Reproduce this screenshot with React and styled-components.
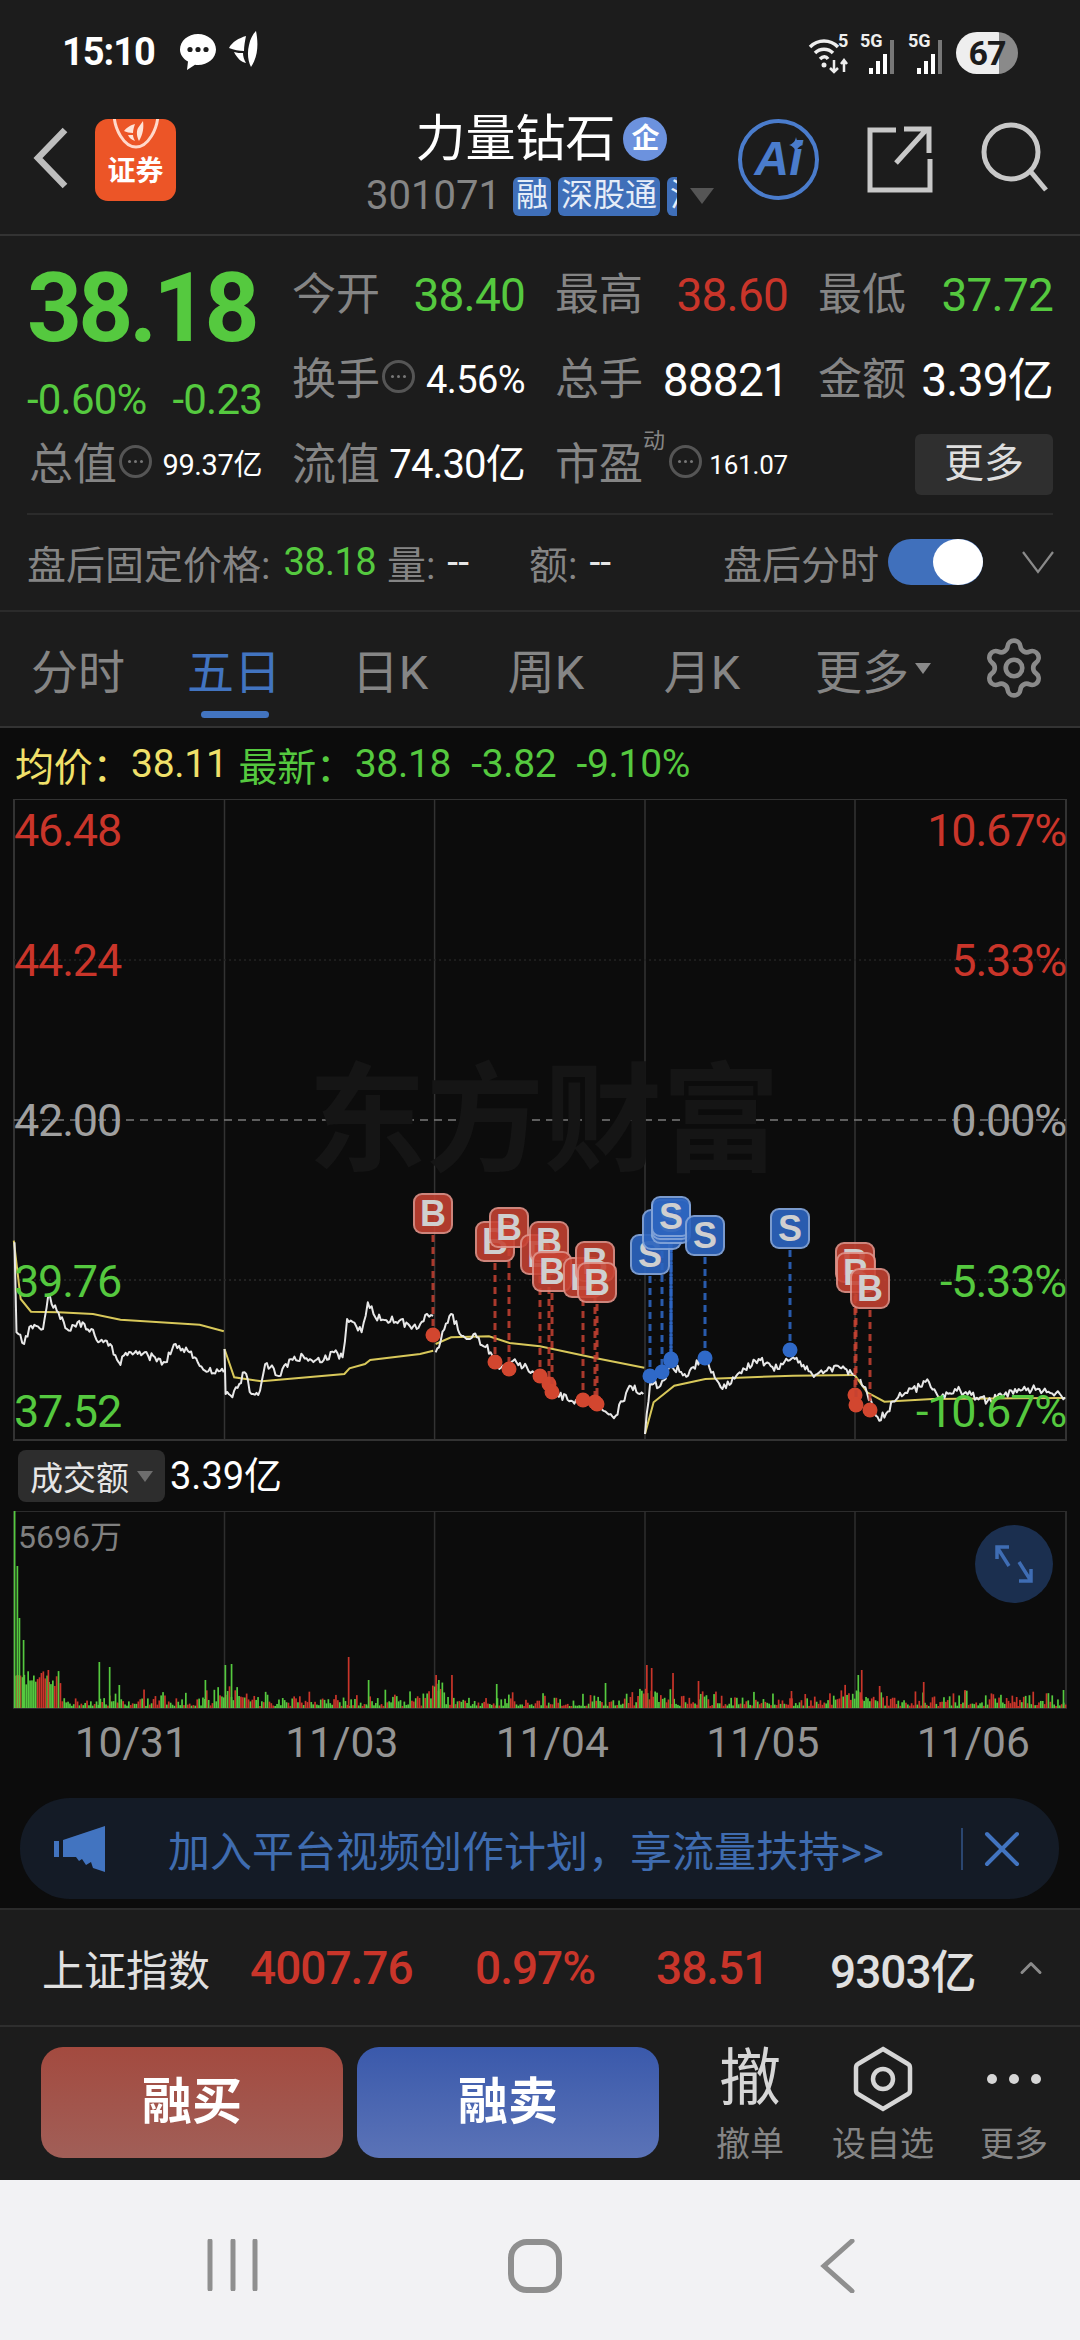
import React from "react";
import styled, { createGlobalStyle } from "styled-components";
import { Settings, X, ChevronUp } from "lucide-react";

const FONT = `Roboto, "Noto Sans CJK SC", sans-serif`;
const GREEN = "#55c93f";
const RED = "#c9352a";
const GRAY = "#858585";

const GlobalStyle = createGlobalStyle`
  html, body { margin: 0; padding: 0; background: #1c1c1c; }
  * { box-sizing: border-box; }
`;

const Page = styled.div`
  width: 1080px;
  height: 2340px;
  overflow: hidden;
  display: flex;
  flex-direction: column;
  background: #1c1c1c;
  font-family: ${FONT};
  color: #fff;
`;

const Icon = styled.svg`
  flex: none;
  display: block;
  margin: ${(p) => p.$m || "0"};
`;

/* status bar */
const StatusBar = styled.div`
  height: 96px;
  flex: none;
  display: flex;
  align-items: flex-start;
  padding: 30px 62px 0 62px;
`;
const Time = styled.div`
  font-size: 38px;
  line-height: 44px;
  font-weight: 700;
  letter-spacing: -1px;
  width: 117px;
`;
const StatusRight = styled.div`
  margin-left: auto;
  display: flex;
  align-items: center;
  gap: 8px;
`;
const Battery = styled.div`
  width: 62px;
  height: 42px;
  border-radius: 21px;
  background: linear-gradient(90deg, #eeeeee 0 70%, #8a8a8a 70%);
  color: #1c1c1c;
  font-size: 34px;
  font-weight: 700;
  line-height: 42px;
  text-align: center;
  letter-spacing: -1px;
`;

/* header */
const Header = styled.header`
  height: 140px;
  flex: none;
  display: grid;
  grid-template-columns: 1fr auto 1fr;
  border-bottom: 2px solid #333;
`;
const HeaderLeft = styled.div`
  display: flex;
  align-items: flex-start;
  padding: 23px 0 0 33px;
  gap: 25px;
`;
const Logo = styled.div`
  width: 81px;
  height: 82px;
  border-radius: 13px;
  background: #ec5527;
  display: flex;
  flex-direction: column;
  align-items: center;
  overflow: hidden;
`;
const LogoText = styled.div`
  font-size: 28px;
  line-height: 30px;
  font-weight: 700;
  margin-top: 6px;
`;
const HeaderCenter = styled.div`
  display: flex;
  flex-direction: column;
  align-items: center;
  padding-top: 17px;
`;
const TitleRow = styled.div`
  display: flex;
  align-items: center;
  gap: 8px;
  height: 52px;
  padding-left: 3px;
`;
const Title = styled.div`
  font-size: 50px;
  line-height: 52px;
`;
const CorpBadge = styled.div`
  width: 44px;
  height: 44px;
  border-radius: 50%;
  background: #6c92de;
  font-size: 28px;
  font-weight: 700;
  line-height: 44px;
  text-align: center;
`;
const CodeRow = styled.div`
  display: flex;
  align-items: center;
  margin-top: 11px;
  height: 40px;
`;
const Code = styled.div`
  font-size: 40px;
  line-height: 44px;
  color: ${GRAY};
  margin-right: 12px;
`;
const TagClip = styled.div`
  display: flex;
  gap: 7px;
  width: 164px;
  overflow: hidden;
`;
const Tag = styled.div`
  flex: none;
  height: 39px;
  padding: 0 3px;
  border-radius: 6px;
  background: #3f6fb9;
  color: #e6edf8;
  font-size: 32px;
  line-height: 37px;
`;
const Caret = styled.div`
  flex: none;
  width: 0;
  height: 0;
  margin-left: ${(p) => p.$left || 13}px;
  border-left: ${(p) => p.$size || 12}px solid transparent;
  border-right: ${(p) => p.$size || 12}px solid transparent;
  border-top: ${(p) => (p.$size || 12) * 1.4}px solid ${(p) => p.$color || "#555"};
`;
const HeaderRight = styled.div`
  display: flex;
  align-items: flex-start;
  justify-content: flex-end;
  padding: 23px 31px 0 0;
  gap: 47px;
`;
const AiCircle = styled.div`
  position: relative;
  width: 81px;
  height: 81px;
  border-radius: 50%;
  border: 4px solid #4a7ccc;
  color: #4a7ccc;
  font-family: "Liberation Sans", sans-serif;
  font-weight: 700;
  font-style: italic;
  font-size: 48px;
  line-height: 72px;
  text-align: center;
`;
const AiSpark = styled.svg`
  position: absolute;
  left: 47px;
  top: 14px;
`;

/* quote panel */
const Quote = styled.section`
  height: 278px;
  flex: none;
  padding: 16px 0 0 29px;
  display: grid;
  grid-template-columns: 233px 233px 233px 235px;
  grid-auto-rows: 85px;
  column-gap: 30px;
`;
const PriceBlock = styled.div`
  grid-row: span 2;
  display: flex;
  flex-direction: column;
`;
const BigPrice = styled.div`
  font-size: 96px;
  line-height: 96px;
  font-weight: 700;
  letter-spacing: -3.9px;
  color: ${GREEN};
  margin: 8px 0 0 -2px;
`;
const ChangeRow = styled.div`
  display: flex;
  justify-content: space-between;
  margin: 21px 0 0 -2px;
  font-size: 42px;
  line-height: 46px;
  letter-spacing: -0.8px;
  color: ${GREEN};
`;
const Cell = styled.div`
  display: flex;
  align-items: center;
  position: relative;
`;
const Label = styled.span`
  font-size: 44px;
  line-height: 52px;
  color: ${GRAY};
  flex: none;
`;
const Val = styled.span`
  margin-left: auto;
  font-size: ${(p) => p.$size || 46}px;
  line-height: 54px;
  color: ${(p) => p.$color || "#fff"};
  white-space: nowrap;
  letter-spacing: ${(p) => p.$track ?? -0.8}px;
`;
const Sup = styled.span`
  position: absolute;
  left: 88px;
  top: 0;
  font-size: 22px;
  color: ${GRAY};
`;
const MoreBtn = styled.div`
  width: 138px;
  height: 61px;
  margin-left: auto;
  border-radius: 6px;
  background: #2f2f2f;
  color: #dedede;
  font-size: 40px;
  line-height: 60px;
  text-align: center;
`;
const DotCircle = styled.span`
  flex: none;
  width: 33px;
  height: 33px;
  margin: -6px 0 0 ${(p) => p.$left ?? 2}px;
  border-radius: 50%;
  border: 3px solid #555;
  display: flex;
  align-items: center;
  justify-content: center;
  &::before {
    content: "";
    width: 3px;
    height: 3px;
    border-radius: 50%;
    background: #777;
    box-shadow: 6px 0 0 #777, -6px 0 0 #777;
  }
`;

/* after hours row */
const AfterHours = styled.section`
  height: 97px;
  flex: none;
  margin-top: -1px;
  display: flex;
  align-items: center;
  padding: 0 0 0 27px;
  position: relative;
  &::before {
    content: "";
    position: absolute;
    top: 0;
    left: 27px;
    right: 27px;
    height: 2px;
    background: #2b2b2b;
  }
`;
const AfterText = styled.span`
  flex: none;
  font-size: ${(p) => p.$size || 39}px;
  letter-spacing: ${(p) => p.$track ?? 0}px;
  color: ${(p) => p.$color || GRAY};
  margin-left: ${(p) => p.$left || 0}px;
  white-space: nowrap;
`;
const Toggle = styled.div`
  flex: none;
  width: 95px;
  height: 46px;
  margin-left: 9px;
  border-radius: 23px;
  background: #4070bc;
  display: flex;
  justify-content: flex-end;
`;
const Knob = styled.div`
  width: 50px;
  height: 46px;
  border-radius: 50%;
  background: #fff;
`;

/* period tabs */
const Tabs = styled.nav`
  height: 118px;
  flex: none;
  display: grid;
  grid-template-columns: repeat(7, 156px);
  border-top: 2px solid #2b2b2b;
  border-bottom: 2px solid #333;
`;
const Tab = styled.div`
  display: flex;
  align-items: center;
  justify-content: center;
  padding: 0 0 2px ${(p) => p.$shift || 0}px;
  font-size: 47px;
  color: ${(p) => (p.$active ? "#4274c0" : GRAY)};
  position: relative;
`;
const TabBar = styled.div`
  position: absolute;
  left: 45px;
  bottom: 8px;
  width: 68px;
  height: 7px;
  border-radius: 4px;
  background: #4274c0;
`;

/* chart */
const Dark = styled.div`
  flex: none;
  background: #0c0c0c;
  position: relative;
  padding-bottom: 9px;
`;
const InfoRow = styled.div`
  height: 71px;
  display: flex;
  align-items: center;
  padding-left: 15px;
  font-size: 39px;
  letter-spacing: -0.3px;
  color: ${GREEN};
  white-space: nowrap;
`;
const InfoText = styled.span`
  color: ${(p) => p.$color || GREEN};
  margin-right: ${(p) => p.$right ?? 20}px;
`;
const ChartBox = styled.div`
  height: 642px;
  position: relative;
`;
const ChartSvg = styled.svg`
  display: block;
  width: 1080px;
  height: 100%;
`;
const Watermark = styled.div`
  position: absolute;
  left: 308px;
  top: 258px;
  font-size: 118px;
  line-height: 130px;
  font-weight: 700;
  color: #151515;
  white-space: nowrap;
`;
const AxisCol = styled.div`
  position: absolute;
  top: 7px;
  ${(p) => (p.$right ? "right: 14px; text-align: right;" : "left: 14px;")}
  display: grid;
  grid-template-rows: 130px 160px 161px 130px 50px;
  font-size: 45px;
  line-height: 50px;
  letter-spacing: -1.2px;
`;
const AxisVal = styled.div`
  color: ${(p) => p.$color};
`;
const Marker = styled.div`
  position: absolute;
  width: 40px;
  height: 41px;
  margin: -20px 0 0 -20px;
  border-radius: 9px;
  border: 2px solid rgba(255, 255, 255, 0.38);
  background: ${(p) => (p.$sell ? "rgba(44, 100, 190, 0.92)" : "rgba(198, 66, 50, 0.88)")};
  color: #cfcfcf;
  font-family: "Liberation Sans", sans-serif;
  font-size: 36px;
  font-weight: 700;
  line-height: 37px;
  text-align: center;
`;
const VolHead = styled.div`
  height: 70px;
  display: flex;
  align-items: flex-start;
  padding: 9px 0 0 18px;
`;
const VolSelect = styled.div`
  width: 147px;
  height: 52px;
  border-radius: 8px;
  background: #2d2d2d;
  display: flex;
  align-items: center;
  padding-left: 12px;
  font-size: 33px;
  color: #e6e6e6;
`;
const VolValue = styled.div`
  margin-left: 5px;
  font-size: 38px;
  line-height: 52px;
`;
const VolBox = styled.div`
  height: 198px;
  position: relative;
`;
const VolMax = styled.div`
  position: absolute;
  left: 18px;
  top: 8px;
  font-size: 32px;
  line-height: 36px;
  color: #808080;
`;
const ExpandBtn = styled.div`
  position: absolute;
  left: 975px;
  top: 14px;
  width: 78px;
  height: 78px;
  border-radius: 50%;
  background: #1b2f4f;
  display: flex;
  align-items: center;
  justify-content: center;
`;
const DateRow = styled.div`
  height: 89px;
  display: grid;
  grid-template-columns: repeat(5, 210.5px);
  padding-left: 26px;
  padding-top: 11px;
  font-size: 42.5px;
  line-height: 46px;
  color: #949494;
  text-align: center;
`;
const Banner = styled.div`
  height: 101px;
  margin: 0 21px 0 20px;
  border-radius: 50px;
  background: #141b26;
  display: flex;
  align-items: center;
  padding-left: 34px;
  color: #3f6cb0;
`;
const BannerText = styled.div`
  margin-left: 62px;
  width: 793px;
  font-size: 42px;
  white-space: nowrap;
`;
const BannerDivider = styled.div`
  width: 2px;
  height: 42px;
  background: #2b4670;
  margin-right: 9px;
`;

/* index strip */
const IndexRow = styled.div`
  height: 119px;
  flex: none;
  display: grid;
  grid-template-columns: 208px 225px 181px 174px 183px 50px;
  align-items: center;
  padding-left: 42px;
  border-top: 2px solid #2b2b2b;
  border-bottom: 2px solid #2e2e2e;
`;
const IndexText = styled.div`
  color: ${(p) => p.$color || "#e0e0e0"};
  font-size: ${(p) => p.$size || 46}px;
  font-weight: ${(p) => p.$weight || 500};
  letter-spacing: ${(p) => p.$track ?? -1}px;
`;

/* bottom trade bar */
const TradeBar = styled.div`
  height: 153px;
  flex: none;
  display: flex;
  padding: 20px 0 0 41px;
`;
const TradeBtn = styled.div`
  width: 302px;
  height: 111px;
  margin-right: 14px;
  border-radius: 22px;
  background: ${(p) =>
    p.$sell
      ? "linear-gradient(180deg, #3a59ab, #5b73b7)"
      : "linear-gradient(180deg, #a34a3f, #a15f58)"};
  font-size: 50px;
  font-weight: 700;
  line-height: 111px;
  text-align: center;
`;
const ActionGrid = styled.div`
  margin-left: 17px;
  display: grid;
  grid-template-columns: 120px 146px 116px;
`;
const Action = styled.div`
  display: flex;
  flex-direction: column;
  align-items: center;
  color: ${GRAY};
  font-size: 34px;
  line-height: 40px;
`;
const ActionIcon = styled.div`
  height: 72px;
  margin: -4px 0 9px;
  display: flex;
  align-items: center;
  justify-content: center;
  color: #d6d6d6;
  font-size: 62px;
`;

/* android nav bar */
const NavBar = styled.div`
  flex: 1;
  background: #f2f2f4;
  display: grid;
  grid-template-columns: 458px 154px 1fr;
  align-items: start;
  padding-top: 59px;
`;
const NavCell = styled.div`
  display: flex;
  justify-content: ${(p) => p.$justify || "flex-start"};
`;

/* ---- chart data ---- */
function rng(seed) {
  let s = seed;
  return () => {
    s = (s * 1664525 + 1013904223) % 4294967296;
    return s / 4294967296;
  };
}

const L = (pts) => pts.map(([x, y]) => [x / 2.904, 1160 + y / 3]);
const R = (pts) => pts.map(([x, y]) => [540 + x / 2.904, 1160 + y / 3]);

const whiteDays = [
  L([[42, 250], [48, 520], [70, 555], [90, 500], [125, 510], [140, 410], [175, 480], [205, 515], [225, 490], [265, 510], [285, 550], [310, 545], [345, 610], [380, 580], [430, 590], [480, 610], [510, 555], [545, 575], [595, 635], [650, 640]]),
  L([[652, 570], [655, 705], [675, 715], [710, 640], [730, 705], [755, 695], [770, 615], [815, 650], [830, 615], [880, 590], [930, 610], [970, 580], [995, 595], [1008, 480], [1050, 520], [1068, 430], [1090, 475], [1160, 485], [1210, 510], [1240, 465], [1258, 470]]),
  L([[1265, 580], [1310, 465], [1340, 530], [1385, 535], [1425, 580], [1450, 630], [1500, 610], [1530, 625], [1568, 650]]).concat(
    R([[40, 700], [90, 725], [125, 720], [165, 735], [220, 770], [260, 680], [300, 705]])
  ),
  R([[305, 825], [320, 670], [350, 680], [380, 620], [430, 650], [470, 590], [530, 690], [580, 640], [635, 600], [690, 630], [735, 595], [790, 645], [870, 625], [915, 650]]),
  R([[930, 660], [985, 785], [1040, 715], [1130, 670], [1160, 715], [1205, 690], [1300, 725], [1390, 690], [1450, 690], [1525, 715]]),
];

const yellowDays = [
  L([[40, 245], [60, 420], [90, 458], [170, 460], [270, 465], [350, 482], [580, 497], [650, 517]]),
  L([[652, 570], [680, 655], [760, 667], [1000, 645], [1015, 628], [1060, 615], [1075, 603], [1220, 585], [1258, 575]]),
  L([[1265, 555], [1310, 535], [1420, 532], [1480, 552], [1568, 562]]).concat(R([[160, 597], [303, 626]])),
  R([[305, 825], [330, 730], [390, 680], [480, 660], [735, 650], [915, 648]]),
  R([[915, 650], [950, 700], [1000, 728], [1140, 720], [1525, 717]]),
];

const toPath = (pts) => pts.map(([x, y], i) => `${i ? "L" : "M"}${x.toFixed(1)} ${y.toFixed(1)}`).join("");

function jitter(pts, seed) {
  const rand = rng(seed);
  const out = [];
  for (let i = 0; i < pts.length - 1; i++) {
    const [x0, y0] = pts[i];
    const [x1, y1] = pts[i + 1];
    const n = Math.max(1, Math.round((x1 - x0) / 1.8));
    for (let k = 0; k < n; k++) {
      const t = k / n;
      const edge = k === 0 ? 0 : 1;
      out.push([x0 + (x1 - x0) * t, y0 + (y1 - y0) * t + (rand() - 0.5) * 8 * edge]);
    }
  }
  out.push(pts[pts.length - 1]);
  return out;
}

const whitePaths = whiteDays.map((d, i) => toPath(jitter(d, 11 + i * 7)));
const yellowPaths = yellowDays.map(toPath);

const BUY = "#c64232";
const SELL = "#2f69c8";
// x, marker y, dot y
const trades = [
  { x: 433, my: 1214, dy: 1336 },
  { x: 495, my: 1242, dy: 1363 },
  { x: 509, my: 1228, dy: 1370 },
  { x: 540, my: 1255, dy: 1377 },
  { x: 549, my: 1242, dy: 1385 },
  { x: 552, my: 1272, dy: 1393 },
  { x: 583, my: 1278, dy: 1401 },
  { x: 595, my: 1262, dy: 1403 },
  { x: 597, my: 1283, dy: 1405 },
  { x: 650, my: 1255, dy: 1377, sell: true },
  { x: 662, my: 1230, dy: 1373, sell: true },
  { x: 671, my: 1224, dy: 1362, sell: true },
  { x: 671, my: 1220, dy: 1361, sell: true },
  { x: 671, my: 1217, dy: 1360, sell: true },
  { x: 705, my: 1236, dy: 1359, sell: true },
  { x: 790, my: 1229, dy: 1351, sell: true },
  { x: 855, my: 1263, dy: 1396 },
  { x: 856, my: 1273, dy: 1406 },
  { x: 870, my: 1289, dy: 1411 },
];

const CHART_TOP = 800;
const gridX = [224.5, 434.6, 645, 855];

// zoom x, height, side
const spikes = [
  [20, 197, "g"], [24, 142, "g"], [27, 90, "g"], [33, 68, "g"], [69, 38, "r"], [143, 46, "g"], [158, 41, "g"], [172, 23, "g"],
  [297, 28, "g"], [326, 43, "g"], [335, 44, "g"], [505, 51, "r"], [534, 28, "g"], [632, 33, "r"], [636, 28, "g"], [655, 33, "r"],
  [720, 24, "g"], [878, 25, "g"], [938, 43, "r"], [945, 40, "r"], [976, 35, "r"], [1013, 27, "r"], [1148, 17, "r"], [1245, 33, "g"],
  [1250, 38, "r"], [1276, 22, "r"], [1340, 26, "r"], [1400, 18, "r"], [1475, 11, "r"], [1543, 18, "g"],
];

const volBars = (() => {
  const rand = rng(77);
  const bars = [];
  for (let x = 14; x < 1066; x += 1.9) {
    const sinceDay = Math.min(...[14, 224.5, 434.6, 645, 855].map((d) => Math.abs(x - d)));
    const boost = sinceDay < 30 ? 12 * (1 - sinceDay / 30) : 0;
    const base = x < 60 ? 22 : 2;
    bars.push({
      x,
      h: base + rand() * rand() * 17 + rand() * boost * 1.4,
      c: rand() > 0.5 ? GREEN : RED,
    });
  }
  spikes.forEach(([zx, h, c]) => bars.push({ x: zx / 1.452, h, c: c === "g" ? GREEN : RED }));
  return bars;
})();

const Feather = () => (
  <Icon width="32" height="38" viewBox="0 0 32 38" $m="0 0 0 -2px">
    <path d="M28 1c2 10 3 24-5 36-3-6-4-14-2-22 1-6 4-11 7-14z" fill="#fff" />
    <path d="M18 6c-1 5-2 10-2 15-5 0-10-1-15-3 3-6 10-10 17-12z" fill="#fff" />
    <path d="M15 23c0 3 1 7 3 10-5-1-9-5-12-11 3 1 6 1 9 1z" fill="#fff" />
  </Icon>
);

const Signal = () => (
  <Icon width="40" height="46" viewBox="0 0 40 46">
    <text x="0" y="17" fontSize="18" fontWeight="700" fill="#eee" fontFamily="Roboto, sans-serif">5G</text>
    <rect x="9" y="38" width="4" height="6" fill="#fff" />
    <rect x="16" y="31" width="4" height="13" fill="#fff" />
    <rect x="23" y="24" width="4" height="20" fill="#fff" />
    <rect x="30" y="10" width="4" height="34" fill="#777" />
  </Icon>
);

export default function App() {
  return (
    <Page>
      <GlobalStyle />
      <StatusBar>
        <Time>15:10</Time>
        <Icon width="38" height="38" viewBox="0 0 38 38" $m="3px 13px 0 0">
          <path d="M19 1c10 0 18 7 18 15.5S29 32 19 32c-1 0-2 0-3-.2L8 37l1-8.5C4 25.8 1 21.500 1 16.500 1 8 9 1 19 1z" fill="#fff" />
          <circle cx="11" cy="16.500" r="2.600" fill="#1c1c1c" />
          <circle cx="19" cy="16.500" r="2.600" fill="#1c1c1c" />
          <circle cx="27" cy="16.500" r="2.600" fill="#1c1c1c" />
        </Icon>
        <Feather />
        <StatusRight>
          <Icon width="44" height="46" viewBox="0 0 44 46">
            <path d="M2 17c8-8 20-8 28 0M7 23c5-5 13-5 18 0M12 29c3-3 6-3 8 0" fill="none" stroke="#eee" strokeWidth="3.500" />
            <circle cx="16" cy="35" r="2.500" fill="#eee" />
            <text x="30" y="17" fontSize="18" fontWeight="700" fill="#eee" fontFamily="Roboto, sans-serif">5</text>
            <path d="M26 30v12m-4-4 4 4 4-4M36 42V30m-3 4 3-4 3 4" fill="none" stroke="#eee" strokeWidth="2.500" />
          </Icon>
          <Signal />
          <Signal />
          <Battery>67</Battery>
        </StatusRight>
      </StatusBar>

      <Header>
        <HeaderLeft>
          <Icon width="37" height="62" viewBox="0 0 37 62" $m="8px 0 0">
            <path d="M32 3 5 31l27 28" fill="none" stroke="#bdbdbd" strokeWidth="6.500" />
          </Icon>
          <Logo>
            <Icon width="60" height="32" viewBox="0 0 60 32">
              <path d="M8-6c0 16 10 34 22 34S52 10 52-6" fill="none" stroke="#ffd9cb" strokeWidth="3" />
              <path d="M37 2c1 7 0 13-4 20-2-4-3-9-1-13zM29 5c-1 3-2 6-2 9-3 0-7-1-9-2 2-3 7-6 11-7zM27 16c0 2 1 4 2 6-3-1-6-3-7-6z" fill="#ffe3d8" />
            </Icon>
            <LogoText>证券</LogoText>
          </Logo>
        </HeaderLeft>
        <HeaderCenter>
          <TitleRow>
            <Title>力量钻石</Title>
            <CorpBadge>企</CorpBadge>
          </TitleRow>
          <CodeRow>
            <Code>301071</Code>
            <TagClip>
              <Tag>融</Tag>
              <Tag>深股通</Tag>
              <Tag>沪</Tag>
            </TagClip>
            <Caret />
          </CodeRow>
        </HeaderCenter>
        <HeaderRight>
          <AiCircle>
            Ai
            <AiSpark width="14" height="16" viewBox="0 0 14 16">
              <path d="M7 0c.8 4 2.500 6.500 7 8-4.500 1.500-6.200 4-7 8-.8-4-2.500-6.500-7-8 4.500-1.500 6.200-4 7-8z" fill="#4a7ccc" />
            </AiSpark>
          </AiCircle>
          <Icon width="68" height="68" viewBox="0 0 68 68" $m="6px 0 0">
            <path d="M30 5H4v60h60V34" fill="none" stroke="#c8c8c8" strokeWidth="5" />
            <path d="M30 38 60 5M38 4h25v24" fill="none" stroke="#c8c8c8" strokeWidth="5" />
          </Icon>
          <Icon width="68" height="70" viewBox="0 0 68 70" $m="3px 0 0">
            <circle cx="30" cy="30" r="27" fill="none" stroke="#c8c8c8" strokeWidth="5" />
            <path d="m50 50 15 18" stroke="#c8c8c8" strokeWidth="5" />
          </Icon>
        </HeaderRight>
      </Header>

      <Quote>
        <PriceBlock>
          <BigPrice>38.18</BigPrice>
          <ChangeRow>
            <span>-0.60%</span>
            <span>-0.23</span>
          </ChangeRow>
        </PriceBlock>
        <Cell><Label>今开</Label><Val $color={GREEN}>38.40</Val></Cell>
        <Cell><Label>最高</Label><Val $color={RED}>38.60</Val></Cell>
        <Cell><Label>最低</Label><Val $color={GREEN}>37.72</Val></Cell>
        <Cell><Label>换手</Label><DotCircle /><Val $size={38} $track={-0.6}>4.56%</Val></Cell>
        <Cell><Label>总手</Label><Val>88821</Val></Cell>
        <Cell><Label>金额</Label><Val>3.39亿</Val></Cell>
        <Cell><Label>总值</Label><DotCircle /><Val $size={29} $track={-0.4}>99.37亿</Val></Cell>
        <Cell><Label>流值</Label><Val $size={40}>74.30亿</Val></Cell>
        <Cell><Label>市盈</Label><Sup>动</Sup><DotCircle $left={26} /><Val $size={26} $track={-0.2}>161.07</Val></Cell>
        <Cell><MoreBtn>更多</MoreBtn></Cell>
      </Quote>

      <AfterHours>
        <AfterText>盘后固定价格:</AfterText>
        <AfterText $color={GREEN} $size={38} $track={-0.6} $left={13}>38.18</AfterText>
        <AfterText $left={11}>量:</AfterText>
        <AfterText $color="#e6e6e6" $left={12}>--</AfterText>
        <AfterText $left={60}>额:</AfterText>
        <AfterText $color="#e6e6e6" $left={12}>--</AfterText>
        <AfterText $left={112}>盘后分时</AfterText>
        <Toggle><Knob /></Toggle>
        <Icon width="34" height="26" viewBox="0 0 34 26" $m="0 0 0 38px">
          <path d="M2 3 17 23 32 3" fill="none" stroke="#8a8a8a" strokeWidth="2.200" />
        </Icon>
      </AfterHours>

      <Tabs>
        <Tab>分时</Tab>
        <Tab $active>五日<TabBar /></Tab>
        <Tab>日K</Tab>
        <Tab>周K</Tab>
        <Tab>月K</Tab>
        <Tab $shift={30}>更多<Caret $size={8} $left={6} $color="#8a8a8a" /></Tab>
        <Tab><Settings size={66} strokeWidth={1.7} color="#8a8a8a" /></Tab>
      </Tabs>

      <Dark>
        <InfoRow>
          <InfoText $color="#f0e06a" $right={0}>均价：</InfoText>
          <InfoText $color="#f0e06a" $right={11}>38.11</InfoText>
          <InfoText $right={0}>最新：</InfoText>
          <InfoText>38.18</InfoText>
          <InfoText>-3.82</InfoText>
          <InfoText>-9.10%</InfoText>
        </InfoRow>
        <ChartBox>
          <Watermark>东方财富</Watermark>
          <ChartSvg viewBox={`0 ${CHART_TOP} 1080 642`}>
            <rect x="14" y="800" width="1052" height="641" fill="none" stroke="#333" strokeWidth="2" />
            {gridX.map((x) => (
              <line key={x} x1={x} x2={x} y1="800" y2="1441" stroke="#333" strokeWidth="1.500" />
            ))}
            <line x1="14" x2="1066" y1="961" y2="961" stroke="#232323" strokeWidth="1.500" strokeDasharray="2 3" />
            <line x1="14" x2="1066" y1="1121" y2="1121" stroke="#7a7a7a" strokeWidth="1.500" strokeDasharray="8 6" />
            <line x1="14" x2="1066" y1="1281" y2="1281" stroke="#2a2a2a" strokeWidth="1.500" strokeDasharray="2 3" />
            {yellowPaths.map((d, i) => (
              <path key={i} d={d} fill="none" stroke="#d8c85a" strokeWidth="2" />
            ))}
            {whitePaths.map((d, i) => (
              <path key={i} d={d} fill="none" stroke="#e8e8e8" strokeWidth="2" strokeLinejoin="round" />
            ))}
            {trades.map((t, i) => (
              <g key={i}>
                <line
                  x1={t.x} x2={t.x} y1={t.my + 22} y2={t.dy}
                  stroke={t.sell ? SELL : BUY} strokeWidth="3" strokeDasharray="7 5" opacity="0.85"
                />
                <circle cx={t.x} cy={t.dy} r="7.500" fill={t.sell ? SELL : "#d2462f"} />
              </g>
            ))}
          </ChartSvg>
          {trades.map((t, i) => (
            <Marker key={i} $sell={t.sell} style={{ left: t.x, top: t.my - CHART_TOP }}>
              {t.sell ? "S" : "B"}
            </Marker>
          ))}
          <AxisCol>
            <AxisVal $color={RED}>46.48</AxisVal>
            <AxisVal $color={RED}>44.24</AxisVal>
            <AxisVal $color="#a0a0a0">42.00</AxisVal>
            <AxisVal $color={GREEN}>39.76</AxisVal>
            <AxisVal $color={GREEN}>37.52</AxisVal>
          </AxisCol>
          <AxisCol $right>
            <AxisVal $color={RED}>10.67%</AxisVal>
            <AxisVal $color={RED}>5.33%</AxisVal>
            <AxisVal $color="#a0a0a0">0.00%</AxisVal>
            <AxisVal $color={GREEN}>-5.33%</AxisVal>
            <AxisVal $color={GREEN}>-10.67%</AxisVal>
          </AxisCol>
        </ChartBox>
        <VolHead>
          <VolSelect>成交额<Caret $size={8} $left={8} $color="#6e6e6e" /></VolSelect>
          <VolValue>3.39亿</VolValue>
        </VolHead>
        <VolBox>
          <ChartSvg viewBox="0 1511 1080 198">
            <rect x="14" y="1511" width="1052" height="197" fill="none" stroke="#2c2c2c" strokeWidth="2" />
            {gridX.map((x) => (
              <line key={x} x1={x} x2={x} y1="1511" y2="1708" stroke="#2e2e2e" strokeWidth="1.500" />
            ))}
            {volBars.map((b, i) => (
              <rect key={i} x={b.x} y={1708 - b.h} width="1.700" height={b.h} fill={b.c} />
            ))}
          </ChartSvg>
          <VolMax>5696万</VolMax>
          <ExpandBtn>
            <Icon width="42" height="42" viewBox="0 0 42 42">
              <path d="M4 16V4h12M4 4l12 19M38 26v12H26M38 38 26 19" fill="none" stroke="#3f6db4" strokeWidth="3.500" />
            </Icon>
          </ExpandBtn>
        </VolBox>
        <DateRow>
          <div>10/31</div>
          <div>11/03</div>
          <div>11/04</div>
          <div>11/05</div>
          <div>11/06</div>
        </DateRow>
        <Banner>
          <Icon width="52" height="46" viewBox="0 0 52 46">
            <rect x="0" y="15" width="5" height="16" fill="#4274c0" />
            <path d="M9 14 51 0v46l-12-4-2-6-5 3-4-6-3 2-3-4H9z" fill="#4274c0" />
          </Icon>
          <BannerText>加入平台视频创作计划，享流量扶持&gt;&gt;</BannerText>
          <BannerDivider />
          <X size={60} strokeWidth={1.6} color="#4274c0" />
        </Banner>
      </Dark>

      <IndexRow>
        <IndexText $size={42} $weight={400} $track={0}>上证指数</IndexText>
        <IndexText $color={RED}>4007.76</IndexText>
        <IndexText $color={RED}>0.97%</IndexText>
        <IndexText $color={RED}>38.51</IndexText>
        <IndexText>9303亿</IndexText>
        <ChevronUp size={36} color="#8a8a8a" strokeWidth={2} />
      </IndexRow>

      <TradeBar>
        <TradeBtn>融买</TradeBtn>
        <TradeBtn $sell>融卖</TradeBtn>
        <ActionGrid>
          <Action>
            <ActionIcon>撤</ActionIcon>
            <span>撤单</span>
          </Action>
          <Action>
            <ActionIcon>
              <Icon width="60" height="66" viewBox="0 0 60 66">
                <path d="M30 3 55 18q2 1 2 4v22q0 3-2 4L30 63 5 48q-2-1-2-4V22q0-3 2-4z" fill="none" stroke="#d6d6d6" strokeWidth="4.500" />
                <circle cx="30" cy="33" r="10" fill="none" stroke="#d6d6d6" strokeWidth="4.500" />
              </Icon>
            </ActionIcon>
            <span>设自选</span>
          </Action>
          <Action>
            <ActionIcon>
              <Icon width="54" height="16" viewBox="0 0 54 16">
                <circle cx="5" cy="8" r="5" fill="#d6d6d6" />
                <circle cx="27" cy="8" r="5" fill="#d6d6d6" />
                <circle cx="49" cy="8" r="5" fill="#d6d6d6" />
              </Icon>
            </ActionIcon>
            <span>更多</span>
          </Action>
        </ActionGrid>
      </TradeBar>

      <NavBar>
        <NavCell>
          <Icon width="52" height="52" viewBox="0 0 52 52" $m="0 0 0 207px">
            <path d="M3 2v48M26 2v48M48 2v48" stroke="#8f8f8f" strokeWidth="5" strokeLinecap="round" />
          </Icon>
        </NavCell>
        <NavCell $justify="center">
          <Icon width="56" height="54" viewBox="0 0 56 54">
            <rect x="4" y="3" width="48" height="48" rx="16" fill="none" stroke="#8f8f8f" strokeWidth="6" />
          </Icon>
        </NavCell>
        <NavCell>
          <Icon width="36" height="54" viewBox="0 0 36 54" $m="0 0 0 208px">
            <path d="M32 2 4 27l28 25" fill="none" stroke="#8f8f8f" strokeWidth="5" strokeLinecap="round" />
          </Icon>
        </NavCell>
      </NavBar>
    </Page>
  );
}
